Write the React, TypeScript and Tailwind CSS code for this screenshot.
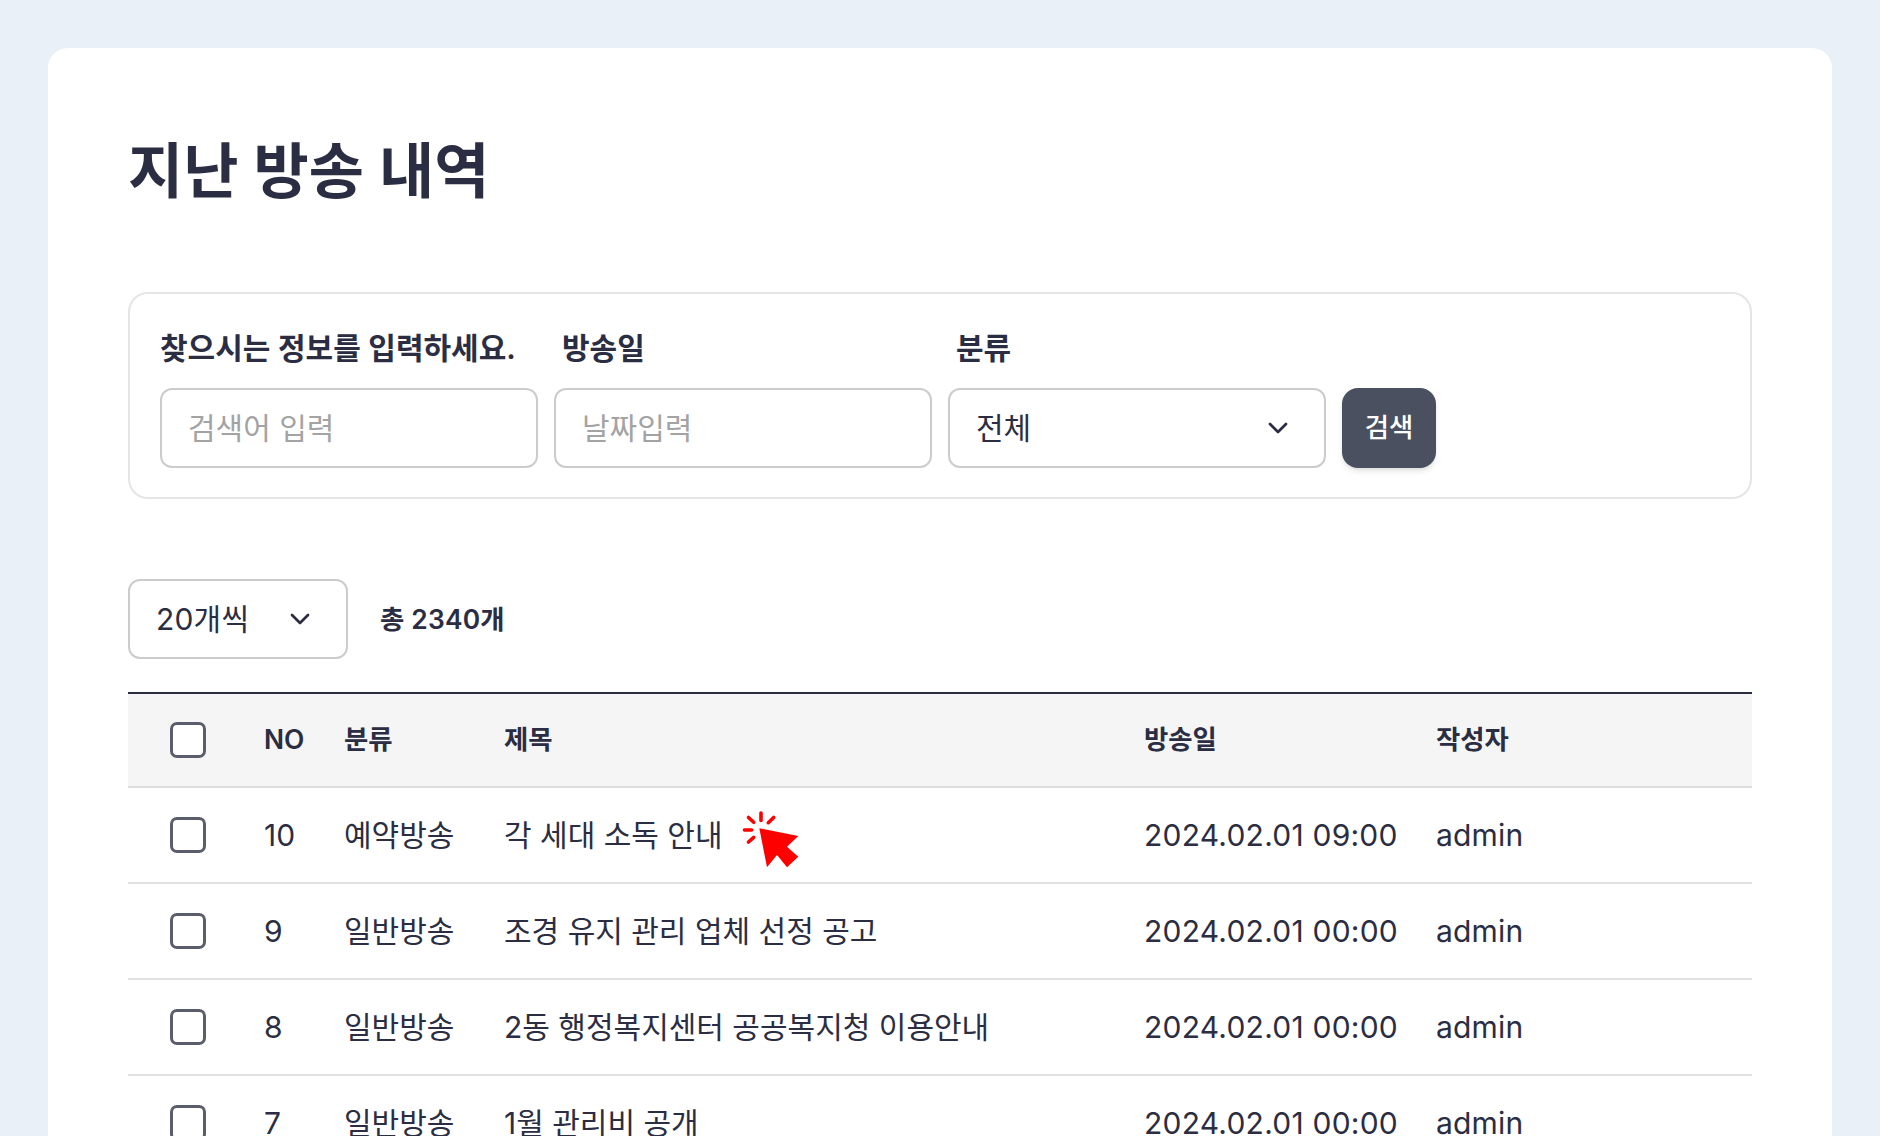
import { ChevronDown } from 'lucide-react'

const rows = [
  { no: 10, category: '예약방송', title: '각 세대 소독 안내', date: '2024.02.01 09:00', author: 'admin', pointer: true },
  { no: 9, category: '일반방송', title: '조경 유지 관리 업체 선정 공고', date: '2024.02.01 00:00', author: 'admin' },
  { no: 8, category: '일반방송', title: '2동 행정복지센터 공공복지청 이용안내', date: '2024.02.01 00:00', author: 'admin' },
  { no: 7, category: '일반방송', title: '1월 관리비 공개', date: '2024.02.01 00:00', author: 'admin' },
]

function ClickPointer() {
  return (
    <svg viewBox="0 0 62 62" className="ml-[18px] mt-3 h-[62px] w-[62px] shrink-0" aria-hidden>
      <polygon points="18.3,18.3 57.3,26 46,36.7 57.3,46.7 46,57.3 36,45 26,57.3" fill="#ff0000" />
      <g stroke="#ff0000" strokeWidth="3.6" strokeLinecap="round">
        <line x1="20" y1="3" x2="20" y2="10.5" />
        <line x1="7.5" y1="7.5" x2="12.7" y2="12.3" />
        <line x1="27.3" y1="12.7" x2="32.7" y2="7.5" />
        <line x1="3.5" y1="20" x2="10.7" y2="20" />
        <line x1="7.5" y1="32" x2="12.7" y2="27.3" />
      </g>
    </svg>
  )
}

function Checkbox() {
  return <span className="block h-9 w-9 rounded-[7px] border-[3px] border-[#5a5d6b] bg-white" />
}

function Field({ label, labelClass, placeholder }: { label: string; labelClass?: string; placeholder: string }) {
  return (
    <div className="w-[378px]">
      <div className={`mb-[22px] h-9 text-[30px] font-semibold leading-9 ${labelClass ?? ''}`}>{label}</div>
      <input
        readOnly
        placeholder={placeholder}
        className="h-20 w-full rounded-xl border-2 border-[#cccccc] bg-white px-[26px] text-[30px] outline-none placeholder:text-[#a3a3a3]"
      />
    </div>
  )
}

export default function App() {
  return (
    <div className="h-[1136px] overflow-hidden bg-[#eaf0f8] px-12 pt-12 font-['Inter','Noto_Sans_CJK_KR',sans-serif] text-[#2b2d42]">
      <div className="h-[1200px] rounded-[20px] bg-white px-20 pt-[70px]">
        <h1 className="h-[106px] text-[60px] font-semibold leading-[106px]">지난 방송 내역</h1>

        <div className="mt-[68px] flex h-[207px] items-start gap-4 rounded-[20px] border-2 border-[#e5e5e5] px-[30px] pt-[36px]">
          <Field label="찾으시는 정보를 입력하세요." placeholder="검색어 입력" />
          <Field label="방송일" labelClass="pl-2" placeholder="날짜입력" />
          <div className="w-[378px]">
            <div className="mb-[22px] h-9 pl-2 text-[30px] font-semibold leading-9">분류</div>
            <div className="flex h-20 items-center justify-between rounded-xl border-2 border-[#cccccc] pl-[26px] pr-[30px] text-[30px]">
              전체
              <ChevronDown size={32} strokeWidth={2} />
            </div>
          </div>
          <button className="mt-[58px] h-20 w-[94px] rounded-2xl bg-[#4a5060] text-[26.4px] font-medium text-white shadow-md">
            검색
          </button>
        </div>

        <div className="mt-20 flex items-center">
          <div className="flex h-20 w-[220px] items-center justify-between rounded-xl border-2 border-[#cccccc] pl-[26px] pr-[30px] text-[30px] tracking-[0.2px]">
            20개씩
            <ChevronDown size={32} strokeWidth={2} />
          </div>
          <div className="ml-8 mt-[2px] text-[26.4px] font-semibold tracking-[0.2px]">총 2340개</div>
        </div>

        <div className="mt-[33px] border-t-2 border-[#2b2d42]">
          <div className="flex h-[94px] items-center border-b-2 border-[#dddddd] bg-[#f5f5f5] text-[26.4px] font-semibold">
            <div className="w-[136px] pl-[42px]"><Checkbox /></div>
            <div className="w-20">NO</div>
            <div className="w-40">분류</div>
            <div className="w-[640px]">제목</div>
            <div className="w-[292px]">방송일</div>
            <div>작성자</div>
          </div>
          {rows.map((row) => (
            <div key={row.no} className="flex h-24 items-center border-b-2 border-[#e2e2e2] text-[30px]">
              <div className="w-[136px] pl-[42px]"><Checkbox /></div>
              <div className="w-20">{row.no}</div>
              <div className="w-40">{row.category}</div>
              <div className="flex w-[640px] items-center">
                {row.title}
                {row.pointer ? <ClickPointer /> : null}
              </div>
              <div className="w-[292px] tracking-[0.23px]">{row.date}</div>
              <div className="tracking-[0.2px]">{row.author}</div>
            </div>
          ))}
        </div>
      </div>
    </div>
  )
}
